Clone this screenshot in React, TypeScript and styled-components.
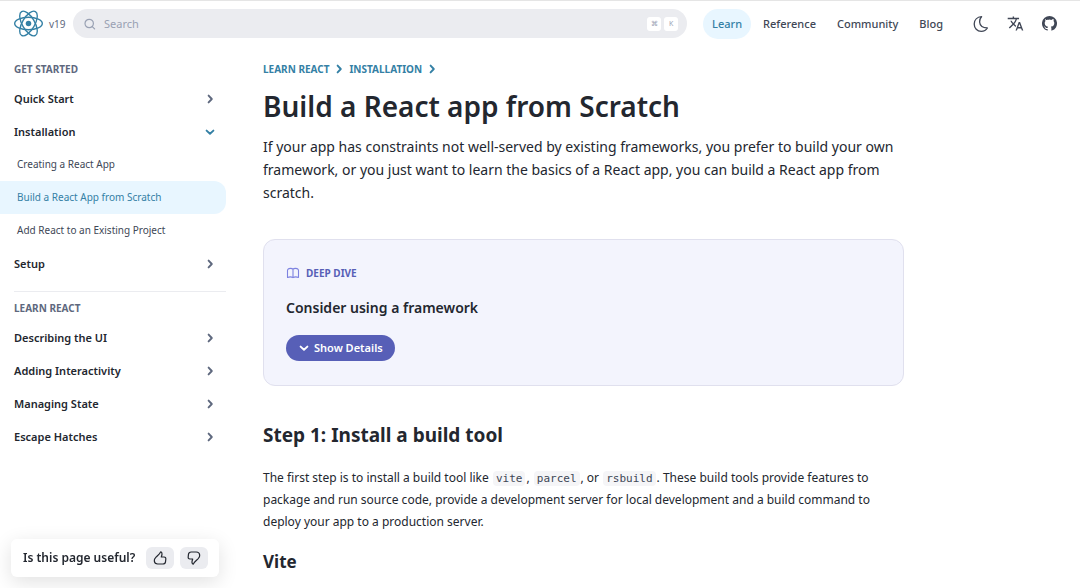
import React from "react";
import styled, { createGlobalStyle } from "styled-components";

const color = {
  text: "#23272f",
  muted: "#5e687e",
  secondary: "#404756",
  link: "#3480a5",
  highlight: "#e8f6ff",
  field: "#ebecf0",
  fieldText: "#99a1b3",
  purple: "#575fb7",
};

const GlobalStyle = createGlobalStyle`
  *, *::before, *::after { box-sizing: border-box; }
  html, body { margin: 0; }
  body {
    background: #fff;
    color: ${color.text};
    font-family: "Noto Sans", "Open Sans", sans-serif;
    font-size: 12px;
    line-height: 22px;
    overflow: hidden;
  }
  h1, h2, h3, h4, h5, p { margin: 0; padding: 0; }
  a { color: inherit; text-decoration: none; }
  button { font: inherit; color: inherit; border: 0; background: none; padding: 0; cursor: pointer; }
  svg { display: block; flex: none; }
`;

const Page = styled.div`
  border-top: 1px solid #e5e5e5;
  min-height: 100vh;
`;

const TopBar = styled.header`
  display: flex;
  align-items: center;
  height: 45px;
  padding: 0 20px 0 14px;
`;

const Brand = styled.a`
  display: flex;
  align-items: center;
  gap: 6px;
  width: 59px;
  color: ${color.muted};
  font-size: 10px;
  svg { color: ${color.link}; }
`;

const SearchBox = styled.label`
  display: flex;
  align-items: center;
  flex: 1;
  gap: 3px;
  height: 29px;
  padding: 0 9px 0 10px;
  border-radius: 15px;
  background: ${color.field};
  color: ${color.fieldText};
`;

const SearchInput = styled.input`
  flex: 1;
  min-width: 0;
  padding: 0 4px;
  border: 0;
  outline: 0;
  background: transparent;
  font: inherit;
  font-size: 11px;
  &::placeholder { color: ${color.fieldText}; opacity: 1; }
`;

const Key = styled.kbd`
  display: flex;
  align-items: center;
  justify-content: center;
  width: 14px;
  height: 14px;
  border-radius: 3px;
  background: #fff;
  font-family: inherit;
  font-size: 7px;
`;

const MainNav = styled.nav`
  display: flex;
  align-items: center;
  gap: 3px;
  margin-left: 16px;
`;

const NavLink = styled.a<{ $active?: boolean }>`
  height: 30px;
  padding: 0 9px;
  border-radius: 15px;
  font-size: 11px;
  font-weight: 500;
  line-height: 30px;
  color: ${(p) => (p.$active ? color.link : color.secondary)};
  background: ${(p) => (p.$active ? color.highlight : "transparent")};
`;

const Tools = styled.div`
  display: flex;
  align-items: center;
  gap: 12px;
  margin-left: 18px;
  color: ${color.secondary};
  a, button {
    display: flex;
    align-items: center;
    justify-content: center;
    width: 22px;
    height: 22px;
  }
`;

const Body = styled.div`
  display: grid;
  grid-template-columns: 226px minmax(0, 1fr);
  padding-top: 12px;
`;

const Sidebar = styled.aside`
  min-width: 0;
`;

const SectionTitle = styled.h3`
  margin-bottom: 2px;
  padding-left: 14px;
  color: ${color.muted};
  font-size: 10px;
  font-weight: 700;
  line-height: 22px;
`;

const Row = styled.a<{ $open?: boolean }>`
  display: flex;
  align-items: center;
  justify-content: space-between;
  height: 33px;
  padding: 0 10px 0 14px;
  font-size: 11px;
  font-weight: 600;
  svg { color: ${(p) => (p.$open ? color.link : color.muted)}; }
`;

const SubRow = styled.a<{ $active?: boolean }>`
  display: block;
  height: 33px;
  padding-left: 17px;
  border-radius: 0 12px 12px 0;
  font-size: 10px;
  font-weight: 400;
  line-height: 33px;
  color: ${(p) => (p.$active ? color.link : color.secondary)};
  background: ${(p) => (p.$active ? color.highlight : "transparent")};
`;

const Divider = styled.hr`
  height: 1px;
  margin: 11px 0 5px 14px;
  border: 0;
  background: ${color.field};
`;

const Article = styled.main`
  max-width: 678px;
  padding-left: 37px;
`;

const Crumbs = styled.nav`
  display: flex;
  align-items: center;
  gap: 4px;
  color: ${color.link};
  font-size: 10px;
  font-weight: 700;
`;

const Title = styled.h1`
  margin-top: 6px;
  font-size: 28px;
  font-weight: 600;
  line-height: 40px;
`;

const Intro = styled.p`
  margin-top: 9px;
  font-size: 14px;
  line-height: 23px;
`;

const DeepDive = styled.section`
  display: flex;
  flex-direction: column;
  align-items: flex-start;
  margin-top: 35px;
  padding: 22px 22px 24px;
  border: 1px solid #e0e0ee;
  border-radius: 12px;
  background: #f3f4fd;
`;

const DeepLabel = styled.h5`
  display: flex;
  align-items: center;
  gap: 6px;
  color: ${color.purple};
  font-size: 10px;
  font-weight: 700;
  line-height: 22px;
`;

const DeepTitle = styled.h4`
  margin-top: 12px;
  font-size: 14px;
  font-weight: 600;
  line-height: 24px;
`;

const DetailsButton = styled.button`
  display: flex;
  align-items: center;
  gap: 4px;
  height: 26px;
  margin-top: 15px;
  padding: 0 12px;
  border-radius: 13px;
  background: ${color.purple};
  color: #fff;
  font-size: 11px;
  font-weight: 600;
`;

const StepTitle = styled.h2`
  margin-top: 34px;
  font-size: 19px;
  font-weight: 700;
  line-height: 30px;
`;

const Paragraph = styled.p`
  margin-top: 17px;
  font-size: 12px;
  line-height: 22px;
`;

const Code = styled.code`
  display: inline-block;
  margin: 0 1px;
  padding: 0 3px;
  border-radius: 4px;
  background: #f5f5f7;
  color: ${color.secondary};
  font-family: "DejaVu Sans Mono", monospace;
  font-size: 11px;
  line-height: 15px;
`;

const SubTitle = styled.h3`
  margin-top: 15px;
  font-size: 17px;
  font-weight: 700;
  line-height: 28px;
`;

const Feedback = styled.div`
  position: fixed;
  left: 11px;
  bottom: 11px;
  display: flex;
  align-items: center;
  gap: 6px;
  height: 38px;
  padding: 0 11px 0 12px;
  border-radius: 6px;
  background: #fff;
  box-shadow: 0 5px 20px rgba(0, 0, 0, 0.12);
  font-weight: 600;
  white-space: nowrap;
`;

const Question = styled.span`
  margin-right: 5px;
`;

const VoteButton = styled.button`
  display: flex;
  align-items: center;
  justify-content: center;
  width: 28px;
  height: 22px;
  border-radius: 6px;
  background: ${color.field};
`;

const ReactLogo = () => (
  <svg width="29" height="27" viewBox="-10.5 -9.45 21 18.9" fill="none" aria-hidden="true">
    <circle r="2" fill="currentColor" />
    <g stroke="currentColor" strokeWidth="1">
      <ellipse rx="10" ry="4.5" />
      <ellipse rx="10" ry="4.5" transform="rotate(60)" />
      <ellipse rx="10" ry="4.5" transform="rotate(120)" />
    </g>
  </svg>
);

const Chevron = ({ down = false }: { down?: boolean }) => (
  <svg width="12" height="12" viewBox="0 0 12 12" fill="none" stroke="currentColor" strokeWidth="1.9" strokeLinecap="round" strokeLinejoin="round" aria-hidden="true">
    <path d={down ? "M2.6 4.6 6 7.800l3.400-3.200" : "M4.600 2.600 7.800 6l-3.200 3.400"} />
  </svg>
);

const SearchIcon = () => (
  <svg width="14" height="14" viewBox="0 0 14 14" fill="none" stroke="currentColor" strokeWidth="1.2" strokeLinecap="round" aria-hidden="true">
    <circle cx="6.2" cy="6.5" r="4.2" />
    <path d="m9.3 9.600 2.300 2.300" />
  </svg>
);

const MoonIcon = () => (
  <svg width="18" height="18" viewBox="0 0 18 18" fill="none" stroke="currentColor" strokeWidth="1.3" strokeLinejoin="round" aria-hidden="true">
    <path d="M9.600 1.700C5.200 2 2.200 5 2.200 9c0 4.300 3 7.300 7 7.300 2.800 0 5-1.200 6.200-3.300C11 12.900 7.900 10.600 7.600 7c-.2-2.200.6-4 2-5.300Z" />
  </svg>
);

const TranslateIcon = () => (
  <svg width="17" height="17" viewBox="0 0 24 24" fill="currentColor" aria-hidden="true">
    <path d="M12.87 15.07l-2.54-2.51.03-.03c1.74-1.94 2.98-4.17 3.71-6.53H17V4h-7V2H8v2H1v1.99h11.17C11.5 7.92 10.44 9.75 9 11.35 8.07 10.32 7.3 9.19 6.69 8h-2c.73 1.63 1.73 3.17 2.98 4.56l-5.09 5.02L4 19l5-5 3.11 3.11.76-2.04zM18.5 10h-2L12 22h2l1.12-3h4.75L21 22h2l-4.5-12zm-2.62 7l1.62-4.33L19.12 17h-3.24z" />
  </svg>
);

const GitHubIcon = () => (
  <svg width="15" height="15" viewBox="0 0 20 20" fill="currentColor" aria-hidden="true">
    <path d="M10 0a10 10 0 0 0-3.16 19.49c.5.1.68-.22.68-.48l-.01-1.7c-2.78.6-3.37-1.34-3.37-1.34-.46-1.16-1.11-1.47-1.11-1.47-.9-.62.07-.6.07-.6 1 .07 1.53 1.03 1.53 1.03.9 1.52 2.34 1.08 2.91.83.1-.65.35-1.09.63-1.34-2.22-.25-4.55-1.11-4.55-4.94 0-1.1.39-1.99 1.03-2.69a3.6 3.6 0 0 1 .1-2.64s.84-.27 2.75 1.02a9.58 9.58 0 0 1 5 0c1.91-1.3 2.75-1.02 2.75-1.02.55 1.37.2 2.4.1 2.64.64.7 1.03 1.6 1.03 2.69 0 3.84-2.34 4.68-4.57 4.93.36.31.68.92.68 1.85l-.01 2.75c0 .26.18.58.69.48A10 10 0 0 0 10 0" />
  </svg>
);

const BookIcon = () => (
  <svg width="14" height="12" viewBox="0 0 14 12" fill="none" stroke="#7d82e0" strokeWidth="1.1" strokeLinejoin="round" aria-hidden="true">
    <path d="M7 2.2C6.2 1.4 4.4 1.2 2.9 1.6 1.9 1.9 1.500 2.600 1.500 3.600v6.800c1.800-.7 4.200-.6 5.500.2 1.300-.8 3.700-.9 5.500-.2V3.600c0-1-.4-1.700-1.400-2C9.600 1.200 7.800 1.400 7 2.200ZM7 2.200v8.400" />
  </svg>
);

const ThumbIcon = ({ down = false }: { down?: boolean }) => (
  <svg width="14" height="14" viewBox="0 0 14 14" fill="none" stroke="currentColor" strokeWidth="1.2" strokeLinejoin="round" aria-hidden="true">
    <path
      transform={down ? "rotate(180 7 7)" : undefined}
      d="M7.600.9C6.900 3 4.800 4.400 3 6.100 1.600 7.500 1.100 8.600 1.300 10c.2 1.900 1.500 3 3.400 3h5.100c1.600 0 2.500-.7 2.700-2.200l.3-2.600c.2-1.500-.4-2.200-1.700-2.200H8.300c.5-1.300.9-2.500.7-3.600C8.900 1.600 8.400.9 7.600.9Z"
    />
  </svg>
);

export default function App() {
  return (
    <Page>
      <GlobalStyle />
      <TopBar>
        <Brand href="#home" aria-label="React v19"><ReactLogo />v19</Brand>
        <SearchBox>
          <SearchIcon />
          <SearchInput type="text" placeholder="Search" aria-label="Search" />
          <Key>⌘</Key>
          <Key>K</Key>
        </SearchBox>
        <MainNav>
          <NavLink href="#learn" $active>Learn</NavLink>
          <NavLink href="#reference">Reference</NavLink>
          <NavLink href="#community">Community</NavLink>
          <NavLink href="#blog">Blog</NavLink>
        </MainNav>
        <Tools>
          <button aria-label="Use dark mode"><MoonIcon /></button>
          <a href="#translations" aria-label="Translations"><TranslateIcon /></a>
          <a href="#github" aria-label="Open on GitHub"><GitHubIcon /></a>
        </Tools>
      </TopBar>
      <Body>
        <Sidebar>
          <SectionTitle>GET STARTED</SectionTitle>
          <Row href="#quick-start">Quick Start<Chevron /></Row>
          <Row href="#installation" $open>Installation<Chevron down /></Row>
          <SubRow href="#creating">Creating a React App</SubRow>
          <SubRow href="#scratch" $active>Build a React App from Scratch</SubRow>
          <SubRow href="#existing">Add React to an Existing Project</SubRow>
          <Row href="#setup">Setup<Chevron /></Row>
          <Divider />
          <SectionTitle>LEARN REACT</SectionTitle>
          <Row href="#ui">Describing the UI<Chevron /></Row>
          <Row href="#interactivity">Adding Interactivity<Chevron /></Row>
          <Row href="#state">Managing State<Chevron /></Row>
          <Row href="#escape">Escape Hatches<Chevron /></Row>
        </Sidebar>
        <Article>
          <Crumbs aria-label="Breadcrumb">
            <a href="#learn">LEARN REACT</a><Chevron />
            <a href="#installation">INSTALLATION</a><Chevron />
          </Crumbs>
          <Title>Build a React app from Scratch</Title>
          <Intro>
            If your app has constraints not well-served by existing frameworks, you prefer to build your own
            framework, or you just want to learn the basics of a React app, you can build a React app from scratch.
          </Intro>
          <DeepDive>
            <DeepLabel><BookIcon />DEEP DIVE</DeepLabel>
            <DeepTitle>Consider using a framework</DeepTitle>
            <DetailsButton><Chevron down />Show Details</DetailsButton>
          </DeepDive>
          <StepTitle>Step 1: Install a build tool</StepTitle>
          <Paragraph>
            The first step is to install a build tool like <Code>vite</Code>, <Code>parcel</Code>, or{" "}
            <Code>rsbuild</Code>. These build tools provide features to package and run source code, provide a
            development server for local development and a build command to deploy your app to a production server.
          </Paragraph>
          <SubTitle>Vite</SubTitle>
        </Article>
      </Body>
      <Feedback>
        <Question>Is this page useful?</Question>
        <VoteButton aria-label="Yes"><ThumbIcon /></VoteButton>
        <VoteButton aria-label="No"><ThumbIcon down /></VoteButton>
      </Feedback>
    </Page>
  );
}
